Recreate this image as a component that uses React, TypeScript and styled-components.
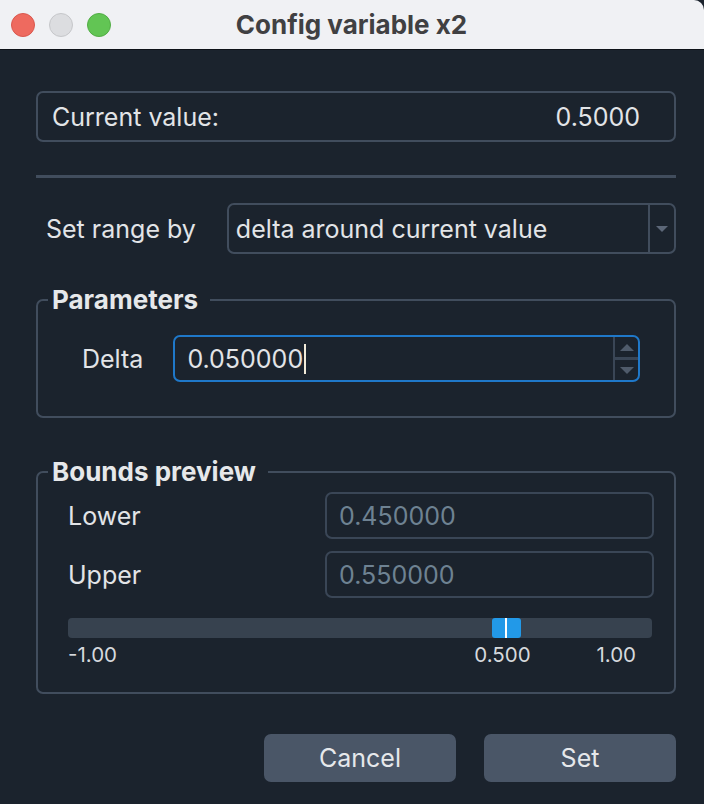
import React from "react";
import styled, { createGlobalStyle } from "styled-components";

const Global = createGlobalStyle`
  html, body { margin: 0; padding: 0; background: #1b232d; }
  * { box-sizing: border-box; }
`;

const Window = styled.div`
  width: 704px;
  height: 804px;
  background: #1b232d;
  font-family: Inter, "Noto Sans", sans-serif;
  color: #e2e4e7;
  display: flex;
  flex-direction: column;
  overflow: hidden;
`;

const TitleBar = styled.div`
  height: 50px;
  flex: none;
  background: #f0f1f4;
  border-bottom: 1px solid #0e1218;
  border-top-right-radius: 10px;
  display: grid;
  grid-template-columns: 1fr auto 1fr;
  align-items: center;
  padding: 0 12px 0 11px;
`;

const Lights = styled.div`
  display: flex;
  gap: 14px;
  align-items: center;
`;

const Light = styled.span<{ $c: string; $b: string }>`
  width: 24px;
  height: 24px;
  border-radius: 50%;
  background: ${(p) => p.$c};
  border: 1px solid ${(p) => p.$b};
`;

const Title = styled.div`
  font-size: 26px;
  line-height: 30px;
  font-weight: 700;
  color: #404042;
`;

const Body = styled.div`
  flex: 1;
  display: flex;
  flex-direction: column;
  padding: 41px 28px 0 36px;
  font-size: 25px;
  line-height: 30px;
`;

const ValueBox = styled.div`
  height: 51px;
  border: 2px solid #414d5d;
  border-radius: 7px;
  display: flex;
  align-items: center;
  justify-content: space-between;
  padding: 0 34px 0 14px;
`;

const Separator = styled.div`
  height: 3px;
  background: #414d5d;
  margin-top: 33px;
`;

const RangeRow = styled.div`
  display: flex;
  align-items: center;
  margin-top: 25px;
  padding-left: 10px;
  gap: 31px;
`;

const Combo = styled.div`
  flex: 1;
  height: 51px;
  border: 2px solid #414d5d;
  border-radius: 7px;
  display: flex;
  align-items: stretch;
`;

const ComboText = styled.div`
  flex: 1;
  display: flex;
  align-items: center;
  padding-left: 7px;
`;

const ComboArrow = styled.div`
  width: 26px;
  border-left: 2px solid #414d5d;
  display: flex;
  align-items: center;
  justify-content: center;
`;

const Group = styled.fieldset<{ $mt: number }>`
  margin: ${(p) => p.$mt}px 0 0 0;
  padding: 0;
  border: 2px solid #414d5d;
  border-radius: 7px;
  min-width: 0;
`;

const Legend = styled.legend`
  margin-left: 10px;
  padding: 0 12px 0 4px;
  font-size: 26px;
  font-weight: 700;
  line-height: 26px;
  color: #e6e8ea;
`;

const ParamRow = styled.div`
  display: flex;
  align-items: center;
  padding: 22px 34px 34px 44px;
  gap: 30px;
`;

const Spin = styled.div`
  flex: 1;
  height: 47px;
  border: 2px solid #1f78c9;
  border-radius: 7px;
  display: flex;
  align-items: stretch;
`;

const SpinText = styled.div`
  flex: 1;
  display: flex;
  align-items: center;
  padding-left: 12px;
`;

const Caret = styled.span`
  display: inline-block;
  width: 2px;
  height: 30px;
  background: #f1ead8;
  margin-left: 1px;
`;

const SpinButtons = styled.div`
  width: 25px;
  border-left: 2px solid #3a4656;
  display: flex;
  flex-direction: column;
`;

const SpinHalf = styled.div<{ $top?: boolean }>`
  flex: 1;
  display: flex;
  align-items: center;
  justify-content: center;
  border-bottom: ${(p) => (p.$top ? "3px solid #3a4656" : "none")};
`;

const BoundsBody = styled.div`
  padding: 7px 20px 25px 30px;
  display: flex;
  flex-direction: column;
`;

const BoundRow = styled.div<{ $mt: number }>`
  display: grid;
  grid-template-columns: 257px 1fr;
  align-items: center;
  margin-top: ${(p) => p.$mt}px;
`;

const ReadField = styled.div`
  height: 47px;
  border: 2px solid #3a4656;
  border-radius: 7px;
  display: flex;
  align-items: center;
  padding-left: 12px;
  color: #6e8292;
`;

const Track = styled.div`
  position: relative;
  height: 20px;
  margin-top: 20px;
  margin-right: 2px;
  background: #37424f;
  border-radius: 4px;
`;

const Handle = styled.div`
  position: absolute;
  top: 0;
  height: 20px;
  width: 29px;
  background: #2299e8;
  border-radius: 3px;
`;

const Marker = styled.div`
  position: absolute;
  top: 0;
  left: 13px;
  width: 2px;
  height: 20px;
  background: #ffffff;
`;

const Ticks = styled.div`
  position: relative;
  height: 24px;
  margin-top: 5px;
  font-size: 20.5px;
  line-height: 24px;
  color: #d6d9dd;
`;

const Tick = styled.span<{ $align: "left" | "center" | "right" }>`
  position: absolute;
  top: 0;
  white-space: nowrap;
  transform: ${(p) =>
    p.$align === "center" ? "translateX(-50%)" : p.$align === "right" ? "translateX(-100%)" : "none"};
`;

const Buttons = styled.div`
  display: flex;
  justify-content: flex-end;
  gap: 28px;
  margin-top: 40px;
`;

const Button = styled.button`
  width: 192px;
  height: 48px;
  border: none;
  border-radius: 7px;
  background: #4a5667;
  color: #e6e8eb;
  font-family: Inter, "Noto Sans", sans-serif;
  font-size: 25px;
  padding: 0;
`;

const Tri = ({ up, w = 12, h = 6, color }: { up?: boolean; w?: number; h?: number; color: string }) => (
  <svg width={w} height={h} viewBox={`0 0 ${w} ${h}`}>
    <polygon points={up ? `0,${h} ${w / 2},0 ${w},${h}` : `0,0 ${w},0 ${w / 2},${h}`} fill={color} />
  </svg>
);

export default function App() {
  const min = -1;
  const max = 1;
  const current = 0.5;
  const trackW = 582;
  const hx = ((current - min) / (max - min)) * trackW;
  return (
    <Window>
      <Global />
      <TitleBar>
        <Lights>
          <Light $c="#ee6a5f" $b="#d9584e" />
          <Light $c="#dcdde0" $b="#c6c7ca" />
          <Light $c="#62c554" $b="#52ad45" />
        </Lights>
        <Title>Config variable x2</Title>
        <div />
      </TitleBar>
      <Body>
        <ValueBox>
          <span>Current value:</span>
          <span>0.5000</span>
        </ValueBox>
        <Separator />
        <RangeRow>
          <span>Set range by</span>
          <Combo>
            <ComboText>delta around current value</ComboText>
            <ComboArrow>
              <Tri w={12} h={6} color="#5c6778" />
            </ComboArrow>
          </Combo>
        </RangeRow>
        <Group $mt={33}>
          <Legend>Parameters</Legend>
          <ParamRow>
            <span>Delta</span>
            <Spin>
              <SpinText>
                0.050000
                <Caret />
              </SpinText>
              <SpinButtons>
                <SpinHalf $top>
                  <Tri up w={14} h={7} color="#4f5b6b" />
                </SpinHalf>
                <SpinHalf>
                  <Tri w={14} h={7} color="#4f5b6b" />
                </SpinHalf>
              </SpinButtons>
            </Spin>
          </ParamRow>
        </Group>
        <Group $mt={41}>
          <Legend>Bounds preview</Legend>
          <BoundsBody>
            <BoundRow $mt={0}>
              <span>Lower</span>
              <ReadField>0.450000</ReadField>
            </BoundRow>
            <BoundRow $mt={12}>
              <span>Upper</span>
              <ReadField>0.550000</ReadField>
            </BoundRow>
            <Track>
              <Handle style={{ left: hx - 12.5 }}>
                <Marker />
              </Handle>
            </Track>
            <Ticks>
              <Tick $align="left" style={{ left: 0 }}>-1.00</Tick>
              <Tick $align="center" style={{ left: hx - 2 }}>0.500</Tick>
              <Tick $align="right" style={{ left: trackW - 14 }}>1.00</Tick>
            </Ticks>
          </BoundsBody>
        </Group>
        <Buttons>
          <Button>Cancel</Button>
          <Button>Set</Button>
        </Buttons>
      </Body>
    </Window>
  );
}
